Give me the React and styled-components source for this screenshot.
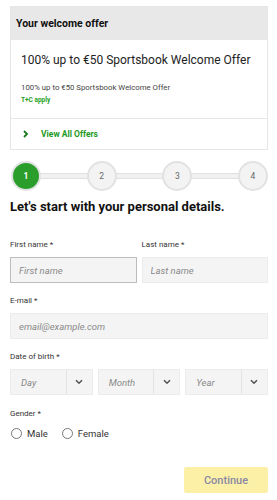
import React from "react";
import styled, { createGlobalStyle } from "styled-components";

const GlobalStyle = createGlobalStyle`
  body {
    margin: 0;
    background: #fff;
    font-family: Roboto, "Liberation Sans", Arial, sans-serif;
    color: #222;
  }
`;

const Page = styled.div`
  padding: 6px 9px 0 10px;
`;

const Card = styled.div`
  border: 1px solid #e6e6e6;
`;

const CardHeader = styled.div`
  height: 33px;
  background: #e8e8e8;
  display: flex;
  align-items: center;
  padding-left: 5px;
  font-size: 10.5px;
  font-weight: 700;
  color: #111;
`;

const CardBody = styled.div`
  padding: 11px 10px 13px;
  border-bottom: 1px solid #e6e6e6;
`;

const OfferTitle = styled.div`
  font-size: 12px;
  line-height: 18px;
  color: #222;
  white-space: nowrap;
`;

const OfferText = styled.div`
  margin-top: 13px;
  font-size: 7.8px;
  line-height: 11px;
  color: #444;
`;

const Terms = styled.div`
  margin-top: 3px;
  font-size: 6.5px;
  line-height: 9px;
  font-weight: 700;
  color: #23a022;
`;

const CardFooter = styled.div`
  height: 30px;
  display: flex;
  align-items: center;
  padding-left: 12px;
  gap: 12px;
  font-size: 8.5px;
  font-weight: 700;
  color: #1e9a1e;
`;

const Stepper = styled.div`
  position: relative;
  display: flex;
  justify-content: space-between;
  margin-top: 11px;
  padding-left: 1px;

  &::before {
    content: "";
    position: absolute;
    left: 20px;
    right: 10px;
    top: 12px;
    height: 4px;
    background: #f1f1f1;
    border: 1px solid #e0e0e0;
  }
`;

const Step = styled.div`
  position: relative;
  width: 26px;
  height: 26px;
  border-radius: 50%;
  border: 2px solid #e2e2e2;
  background: ${(p) => (p.$active ? "#2a9d2a" : "#f3f3f3")};
  color: ${(p) => (p.$active ? "#fff" : "#666")};
  display: flex;
  align-items: center;
  justify-content: center;
  font-size: 8.5px;
  font-weight: ${(p) => (p.$active ? 700 : 400)};
`;

const Heading = styled.h2`
  margin: 8px 0 0;
  font-size: 13px;
  line-height: 16px;
  font-weight: 700;
  color: #111;
`;

const Row = styled.div`
  display: grid;
  grid-template-columns: ${(p) => p.$cols || "1fr"};
  gap: 5px;
  margin-top: ${(p) => p.$top || 0}px;
`;

const Field = styled.div`
  display: flex;
  flex-direction: column;
`;

const Label = styled.label`
  font-size: 8px;
  line-height: 10px;
  color: #333;
  margin-bottom: 7px;
`;

const Input = styled.input`
  box-sizing: border-box;
  width: 100%;
  height: 26px;
  padding: 0 8px;
  border: 1px solid ${(p) => (p.$focus ? "#bdbdbd" : "#ececec")};
  background: #f4f4f4;
  font-family: inherit;
  font-size: 9.5px;
  font-style: italic;
  outline: none;

  &::placeholder {
    color: #8a8a8a;
  }
`;

const Select = styled.div`
  box-sizing: border-box;
  height: 26px;
  display: flex;
  border: 1px solid #ececec;
  background: #f4f4f4;
`;

const SelectValue = styled.div`
  flex: 1;
  display: flex;
  align-items: center;
  padding-left: 10px;
  font-size: 9.5px;
  font-style: italic;
  color: #8a8a8a;
`;

const SelectArrow = styled.div`
  width: 25px;
  border-left: 1px solid #e4e4e4;
  display: flex;
  align-items: center;
  justify-content: center;
`;

const RadioRow = styled.div`
  display: flex;
  gap: 14px;
  padding-left: 1px;
  height: 14px;
`;

const Radio = styled.label`
  display: flex;
  align-items: center;
  gap: 5px;
  font-size: 9.5px;
  color: #333;
`;

const RadioCircle = styled.span`
  width: 9px;
  height: 9px;
  border-radius: 50%;
  border: 1px solid #777;
  background: #fff;
`;

const Actions = styled.div`
  display: flex;
  justify-content: flex-end;
  margin-top: 27px;
`;

const Button = styled.button`
  width: 84px;
  height: 26px;
  border: none;
  border-radius: 2px;
  background: #fcf0a7;
  color: #8a88a4;
  font-family: inherit;
  font-size: 11px;
  font-weight: 500;
`;

const Chevron = () => (
  <svg width="6" height="8" viewBox="0 0 6 8">
    <path d="M1 1l3 3-3 3" fill="none" stroke="#1b7a1b" strokeWidth="1.8" />
  </svg>
);

const Caret = () => (
  <svg width="8" height="6" viewBox="0 0 8 6">
    <path d="M1 1.2l3 3 3-3" fill="none" stroke="#555" strokeWidth="1.6" />
  </svg>
);

const DateSelect = ({ label }) => (
  <Select>
    <SelectValue>{label}</SelectValue>
    <SelectArrow>
      <Caret />
    </SelectArrow>
  </Select>
);

const App = () => (
  <>
    <GlobalStyle />
    <Page>
      <Card>
        <CardHeader>Your welcome offer</CardHeader>
        <CardBody>
          <OfferTitle>100% up to €50 Sportsbook Welcome Offer</OfferTitle>
          <OfferText>100% up to €50 Sportsbook Welcome Offer</OfferText>
          <Terms>T+C apply</Terms>
        </CardBody>
        <CardFooter>
          <Chevron />
          View All Offers
        </CardFooter>
      </Card>

      <Stepper>
        <Step $active>1</Step>
        <Step>2</Step>
        <Step>3</Step>
        <Step>4</Step>
      </Stepper>

      <Heading>Let's start with your personal details.</Heading>

      <Row $cols="1fr 1fr" $top={25}>
        <Field>
          <Label>First name *</Label>
          <Input $focus placeholder="First name" />
        </Field>
        <Field>
          <Label>Last name *</Label>
          <Input placeholder="Last name" />
        </Field>
      </Row>

      <Row $top={13}>
        <Field>
          <Label>E-mail *</Label>
          <Input placeholder="email@example.com" />
        </Field>
      </Row>

      <Row $top={13}>
        <Field>
          <Label>Date of birth *</Label>
          <Row $cols="1fr 1fr 1fr">
            <DateSelect label="Day" />
            <DateSelect label="Month" />
            <DateSelect label="Year" />
          </Row>
        </Field>
      </Row>

      <Row $top={14}>
        <Field>
          <Label>Gender *</Label>
          <RadioRow>
            <Radio>
              <RadioCircle />
              Male
            </Radio>
            <Radio>
              <RadioCircle />
              Female
            </Radio>
          </RadioRow>
        </Field>
      </Row>

      <Actions>
        <Button>Continue</Button>
      </Actions>
    </Page>
  </>
);

export default App;
